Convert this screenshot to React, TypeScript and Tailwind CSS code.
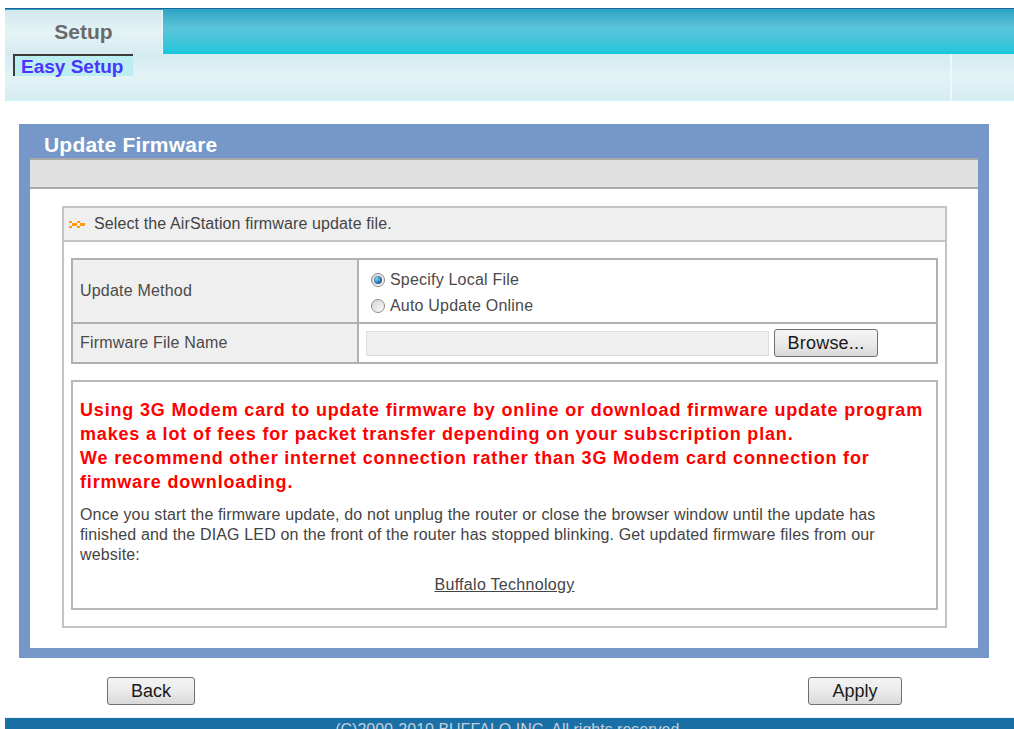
import React from "react";

const font = { fontFamily: '"Liberation Sans", Arial, sans-serif' };

function Radio({ checked }: { checked?: boolean }) {
  return (
    <span className="relative inline-flex w-[14px] h-[14px] rounded-full border border-[#8a8b8b] bg-gradient-to-br from-[#d6d6d6] to-[#fbfbfb] items-center justify-center shrink-0">
      {checked && (
        <span className="w-[8px] h-[8px] rounded-full bg-[radial-gradient(circle_at_35%_35%,#8fd0f5,#1c5a96_70%)]" />
      )}
    </span>
  );
}

function Btn({ label, w }: { label: string; w: string }) {
  return (
    <button
      className={`${w} h-[28px] rounded-[3px] border border-[#707070] bg-gradient-to-b from-[#f4f4f4] via-[#ebebeb] to-[#d8d8d8] text-[18px] text-[#1a1a1a] leading-none`}
    >
      {label}
    </button>
  );
}

function Bullet() {
  return (
    <svg width="17" height="7" viewBox="0 0 17 7" className="shrink-0" shapeRendering="crispEdges">
      <g fill="#ff9a0e">
        <rect x="0" y="0" width="3" height="2" />
        <rect x="3" y="2" width="5" height="3" />
        <rect x="0" y="5" width="3" height="2" />
        <rect x="8" y="0" width="3" height="2" />
        <rect x="11" y="2" width="5" height="3" />
        <rect x="8" y="5" width="3" height="2" />
      </g>
    </svg>
  );
}

export default function App() {
  return (
    <div className="w-[1014px] h-[729px] overflow-hidden bg-white" style={font}>
      {/* Header tabs */}
      <div className="ml-[5px] mt-[8px]">
        <div className="flex h-[46px] border-t border-[#1d639c] bg-gradient-to-b from-[#27a3c4] via-[#5bc3d9] via-40% to-[#13c7dc]">
          <div className="w-[158px] mt-[1px] border-r border-[#e8f8fa] bg-gradient-to-b from-[#d2e8ed] via-[#e4f3f6] to-[#d6ecf0] flex items-center justify-center">
            <span className="text-[21px] font-bold text-[#6a6a6a] mb-[1px]">Setup</span>
          </div>
          <div className="flex-1" />
        </div>
        <div className="flex h-[47px] border-b border-[#c6f7fb] bg-gradient-to-b from-[#d3ebef] via-[#e2f3f6] to-[#d6ecf0]">
          <div className="flex-1 pl-[8px]">
            <div className="w-[120px] h-[22px] border-l-2 border-t-2 border-[#3a3a3a] bg-[#bcedf0] pl-[6px] flex items-center">
              <span className="text-[19px] font-bold text-[#4a35ff] leading-none">Easy Setup</span>
            </div>
          </div>
          <div className="w-[2px] bg-[#eef8fa]" />
          <div className="w-[62px]" />
        </div>
      </div>

      {/* Main panel */}
      <div className="ml-[19px] mt-[23px] w-[970px] bg-[#7698c8] px-[11px] pb-[10px]">
        <div className="h-[34px] pl-[14px] flex items-center">
          <span className="text-[21px] font-bold text-white pt-[7px] leading-none tracking-[0.2px]">Update Firmware</span>
        </div>
        <div className="bg-white pb-[20px]">
          <div className="h-[31px] bg-[#e0e0e0] border-y-2 border-[#a9a9a9]" />
          <div className="mt-[17px] ml-[32px] mr-[31px] border-2 border-[#c4c4c4]">
            <div className="h-[34px] bg-[#efefef] border-b-2 border-[#c4c4c4] flex items-center gap-[8px] pl-[5px]">
              <Bullet />
              <span className="text-[16px] text-[#444] tracking-[0.12px]">Select the AirStation firmware update file.</span>
            </div>
            <div className="px-[7px] pt-[16px] pb-[16px]">
              <table className="w-full border-collapse text-[16px] text-[#4a4a4a] tracking-[0.2px]">
                <tbody>
                  <tr className="h-[64px]">
                    <td className="w-[286px] bg-[#efefef] border-2 border-[#b0b0b0] pl-[7px]">Update Method</td>
                    <td className="border-2 border-[#b0b0b0] pl-[12px]">
                      <div className="flex flex-col gap-[2px] pt-[4px]">
                        <label className="flex items-center gap-[5px]">
                          <Radio checked />
                          Specify Local File
                        </label>
                        <label className="flex items-center gap-[5px]">
                          <Radio />
                          Auto Update Online
                        </label>
                      </div>
                    </td>
                  </tr>
                  <tr className="h-[40px]">
                    <td className="bg-[#efefef] border-2 border-[#b0b0b0] pl-[7px]">Firmware File Name</td>
                    <td className="border-2 border-[#b0b0b0] pl-[7px]">
                      <div className="flex items-center gap-[5px]">
                        <div className="w-[403px] h-[25px] bg-[#efefef] border border-[#dddddd]" />
                        <Btn label="Browse..." w="w-[104px] h-[24px] text-[16px]" />
                      </div>
                    </td>
                  </tr>
                </tbody>
              </table>

              <div className="mt-[16px] border-2 border-[#b8b8b8] px-[7px] pt-[16px] pb-[13px]">
                <p className="text-[18px] font-bold text-[#ff0000] leading-[24px] tracking-[0.82px]">
                  Using 3G Modem card to update firmware by online or download firmware update program makes a lot of fees for packet transfer depending on your subscription plan.
                  <br />
                  We recommend other internet connection rather than 3G Modem card connection for firmware downloading.
                </p>
                <p className="mt-[11px] text-[16px] text-[#444] leading-[20px] tracking-[0.15px]">
                  Once you start the firmware update, do not unplug the router or close the browser window until the update has finished and the DIAG LED on the front of the router has stopped blinking. Get updated firmware files from our website:
                </p>
                <p className="mt-[10px] text-center text-[16px] leading-[20px] tracking-[0.3px]">
                  <a className="text-[#444] underline">Buffalo Technology</a>
                </p>
              </div>
            </div>
          </div>
        </div>
      </div>

      {/* Bottom buttons */}
      <div className="flex justify-between pl-[107px] pr-[112px] mt-[19px]">
        <Btn label="Back" w="w-[88px]" />
        <Btn label="Apply" w="w-[94px]" />
      </div>

      <div className="ml-[5px] mt-[12px] h-[30px] bg-[#1a6fa6] border-t border-[#e6f2f8] text-center">
        <span className="text-[16px] text-[#c2cfdb] leading-[22px]">(C)2000-2010 BUFFALO INC. All rights reserved.</span>
      </div>
    </div>
  );
}
